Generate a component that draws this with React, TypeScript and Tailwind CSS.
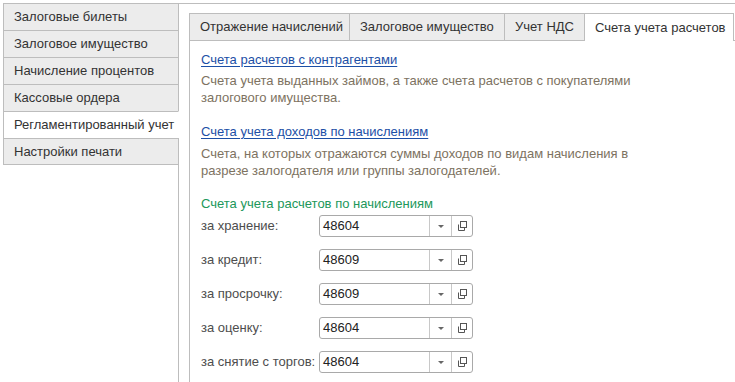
import type { ReactNode } from 'react'

const menuItems = [
  'Залоговые билеты',
  'Залоговое имущество',
  'Начисление процентов',
  'Кассовые ордера',
  'Регламентированный учет',
  'Настройки печати',
]

const tabs = [
  { label: 'Отражение начислений', w: 'w-[161px]' },
  { label: 'Залоговое имущество', w: 'w-[155px]' },
  { label: 'Учет НДС', w: 'w-[80px]' },
  { label: 'Счета учета расчетов', w: 'w-[149px]' },
]

const rows = [
  { label: 'за хранение:', value: '48604' },
  { label: 'за кредит:', value: '48609' },
  { label: 'за просрочку:', value: '48609' },
  { label: 'за оценку:', value: '48604' },
  { label: 'за снятие с торгов:', value: '48604' },
]

function OpenIcon() {
  return (
    <svg width="11" height="11" viewBox="0 0 11 11" fill="none" stroke="#555" strokeWidth="1">
      <rect x="3.5" y="0.5" width="6" height="6" />
      <path d="M1.5 3.5 V9.5 H7.5 V7" />
    </svg>
  )
}

function Field({ value }: { value: string }) {
  return (
    <div className="flex h-[22px] w-[154px] rounded-[3px] border border-[#a9a9a9] bg-white">
      <div className="flex flex-1 items-center pl-[3px] text-[13px] text-[#222]">{value}</div>
      <div className="flex w-[22px] items-center justify-center border-l border-[#c8c8c8]">
        <svg width="6" height="3" viewBox="0 0 6 3">
          <path d="M0 0 H6 L3 3 Z" fill="#666" />
        </svg>
      </div>
      <div className="flex w-[21px] items-center justify-center border-l border-[#c8c8c8]">
        <OpenIcon />
      </div>
    </div>
  )
}

function Link({ children }: { children: ReactNode }) {
  return <div className="text-[13px] leading-[17px] text-[#1c4fa6] underline decoration-[#1c4fa6] underline-offset-[2px]">{children}</div>
}

export default function App() {
  return (
    <div className="flex h-[382px] w-[735px] overflow-hidden bg-white pt-[3px] font-['Liberation_Sans',Arial,sans-serif] text-[13px]">
      <div className="ml-[3px] flex w-[176px] flex-col">
        {menuItems.map((item, i) => {
          const active = i === 4
          return (
            <div
              key={item}
              className={`flex h-[27px] shrink-0 items-center border-l border-t border-[#bdbdbd] pl-[10px] text-[#333] ${i === menuItems.length - 1 ? 'border-b' : ''} ${active ? 'border-r border-r-white bg-white' : 'border-r bg-[#ececec]'}`}
            >
              {item}
            </div>
          )
        })}
        <div className="flex-1 border-r border-[#bdbdbd]" />
      </div>

      <div className="flex flex-1 flex-col border-t border-[#bdbdbd] pl-[10px] pt-[9px]">
        <div className="flex h-[28px] shrink-0">
          {tabs.map((t, i) => {
            const active = i === 3
            return (
              <div
                key={t.label}
                className={`flex ${t.w} items-center border-t border-r border-[#bdbdbd] pl-[10px] text-[#333] ${i === 0 ? 'border-l' : ''} ${active ? 'bg-white' : 'border-b bg-[#ececec]'}`}
              >
                {t.label}
              </div>
            )
          })}
          <div className="flex-1 border-b border-[#bdbdbd]" />
        </div>

        <div className="flex flex-1 flex-col border-l border-[#bdbdbd] pl-[11px] pt-[10px]">
          <Link>Счета расчетов с контрагентами</Link>
          <div className="mt-[4px] text-[13px] leading-[17px] text-[#7d7261]">
            Счета учета выданных займов, а также счета расчетов с покупателями
            <br />
            залогового имущества.
          </div>

          <div className="mt-[17px]">
            <Link>Счета учета доходов по начислениям</Link>
          </div>
          <div className="mt-[5px] text-[13px] leading-[17px] text-[#7d7261]">
            Счета, на которых отражаются суммы доходов по видам начисления в
            <br />
            разрезе залогодателя или группы залогодателей.
          </div>

          <div className="mt-[16px] text-[13px] leading-[17px] text-[#21975a]">Счета учета расчетов по начислениям</div>

          <div className="mt-[3px] flex flex-col gap-[12px]">
            {rows.map(r => (
              <div key={r.label} className="flex items-center">
                <div className="w-[118px] text-[#4d4d4d]">{r.label}</div>
                <Field value={r.value} />
              </div>
            ))}
          </div>
        </div>
      </div>
    </div>
  )
}
